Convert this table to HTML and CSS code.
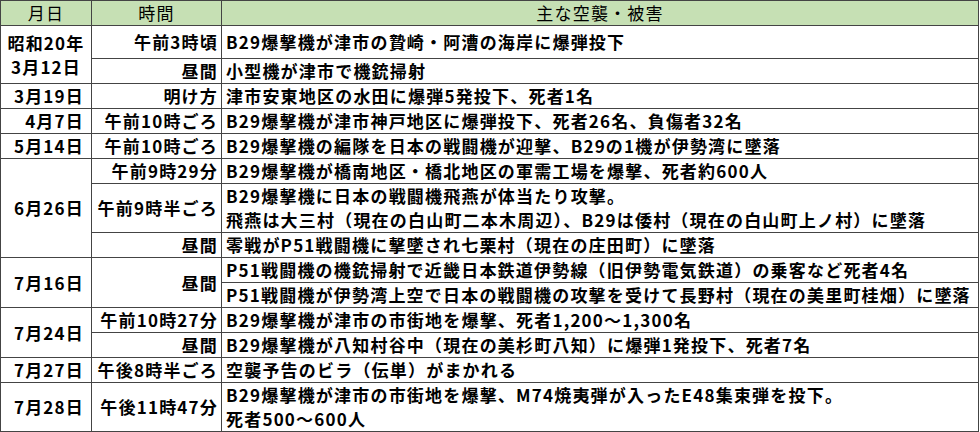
FILE: index.html
```html
<!DOCTYPE html>
<html lang="ja">
<head>
<meta charset="utf-8">
<title>空襲・被害</title>
<link rel="stylesheet" href="styles.css">
</head>
<body>
<table class="raids">
  <colgroup>
    <col class="c-date">
    <col class="c-time">
    <col class="c-desc">
  </colgroup>
  <thead>
    <tr class="head">
      <th>月日</th>
      <th>時間</th>
      <th>主な空襲・被害</th>
    </tr>
  </thead>
  <tbody>
    <tr class="first">
      <td class="date center" rowspan="2">昭和20年<br>3月12日</td>
      <td class="time">午前3時頃</td>
      <td class="desc">B29爆撃機が津市の贄崎・阿漕の海岸に爆弾投下</td>
    </tr>
    <tr>
      <td class="time">昼間</td>
      <td class="desc">小型機が津市で機銃掃射</td>
    </tr>
    <tr>
      <td class="date">3月19日</td>
      <td class="time">明け方</td>
      <td class="desc">津市安東地区の水田に爆弾5発投下、死者1名</td>
    </tr>
    <tr>
      <td class="date">4月7日</td>
      <td class="time">午前10時ごろ</td>
      <td class="desc">B29爆撃機が津市神戸地区に爆弾投下、死者26名、負傷者32名</td>
    </tr>
    <tr>
      <td class="date">5月14日</td>
      <td class="time">午前10時ごろ</td>
      <td class="desc">B29爆撃機の編隊を日本の戦闘機が迎撃、B29の1機が伊勢湾に墜落</td>
    </tr>
    <tr>
      <td class="date" rowspan="3">6月26日</td>
      <td class="time">午前9時29分</td>
      <td class="desc">B29爆撃機が橋南地区・橋北地区の軍需工場を爆撃、死者約600人</td>
    </tr>
    <tr>
      <td class="time">午前9時半ごろ</td>
      <td class="desc">B29爆撃機に日本の戦闘機飛燕が体当たり攻撃。<br>飛燕は大三村（現在の白山町二本木周辺）、B29は倭村（現在の白山町上ノ村）に墜落</td>
    </tr>
    <tr>
      <td class="time">昼間</td>
      <td class="desc">零戦がP51戦闘機に撃墜され七栗村（現在の庄田町）に墜落</td>
    </tr>
    <tr>
      <td class="date" rowspan="2">7月16日</td>
      <td class="time" rowspan="2">昼間</td>
      <td class="desc">P51戦闘機の機銃掃射で近畿日本鉄道伊勢線（旧伊勢電気鉄道）の乗客など死者4名</td>
    </tr>
    <tr>
      <td class="desc">P51戦闘機が伊勢湾上空で日本の戦闘機の攻撃を受けて長野村（現在の美里町桂畑）に墜落</td>
    </tr>
    <tr>
      <td class="date" rowspan="2">7月24日</td>
      <td class="time">午前10時27分</td>
      <td class="desc">B29爆撃機が津市の市街地を爆撃、死者1,200～1,300名</td>
    </tr>
    <tr>
      <td class="time">昼間</td>
      <td class="desc">B29爆撃機が八知村谷中（現在の美杉町八知）に爆弾1発投下、死者7名</td>
    </tr>
    <tr>
      <td class="date">7月27日</td>
      <td class="time">午後8時半ごろ</td>
      <td class="desc">空襲予告のビラ（伝単）がまかれる</td>
    </tr>
    <tr>
      <td class="date">7月28日</td>
      <td class="time">午後11時47分</td>
      <td class="desc">B29爆撃機が津市の市街地を爆撃、M74焼夷弾が入ったE48集束弾を投下。<br>死者500～600人</td>
    </tr>
  </tbody>
</table>
</body>
</html>
```

FILE: styles.css
```css
html, body {
  margin: 0;
  padding: 0;
  background: #ffffff;
}

.raids {
  width: 979px;
  table-layout: fixed;
  border-collapse: collapse;
  font-family: "Noto Sans CJK JP", "Noto Sans", sans-serif;
  font-size: 17px;
  letter-spacing: 1.2px;
  color: #000;
}

.c-date { width: 91px; }
.c-time { width: 130px; }

.raids th,
.raids td {
  border: 1px solid #444;
  line-height: 24px;
  padding: 0;
  white-space: nowrap;
  overflow: visible;
  vertical-align: middle;
}

.raids th {
  background: #c6e0b4;
  font-weight: 400;
  text-align: center;
  height: 24px;
}

.raids td {
  font-weight: 700;
  height: 24px;
}

.raids tr.first td {
  height: 32px;
}

.date {
  text-align: right;
  padding-right: 7px !important;
}

.date.center {
  text-align: center;
  padding-right: 0 !important;
}

.time {
  text-align: right;
  padding-right: 3px !important;
}

.desc {
  text-align: left;
  padding-left: 4px !important;
}
```
